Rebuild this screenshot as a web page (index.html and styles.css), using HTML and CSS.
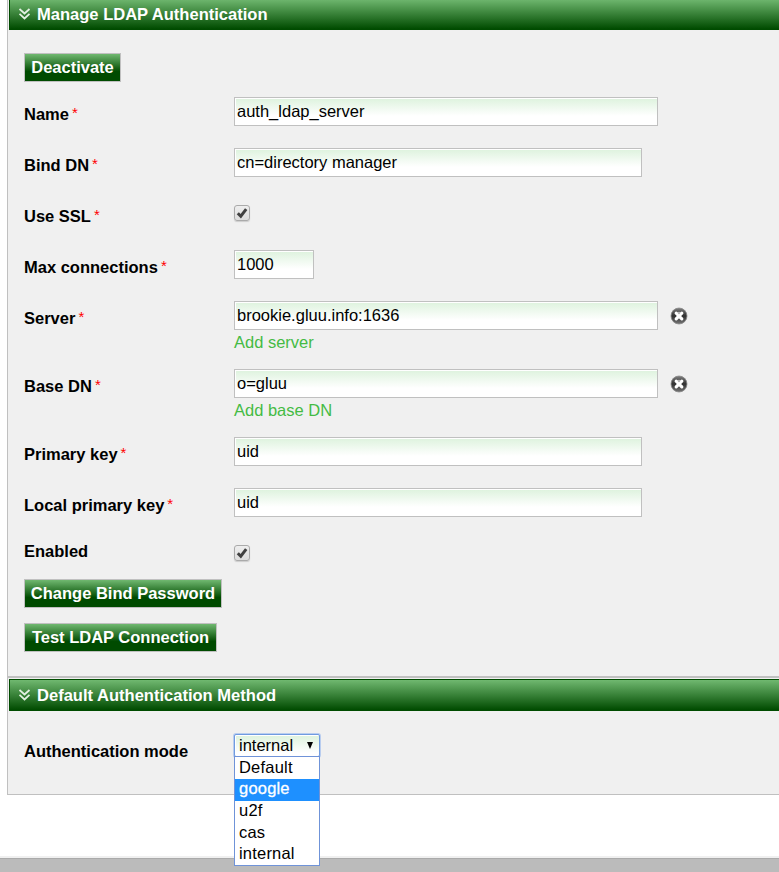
FILE: index.html
```
<!DOCTYPE html>
<html lang="en">
<head>
<meta charset="utf-8">
<title>Manage Authentication</title>
<link rel="stylesheet" href="styles.css">
</head>
<body>
<svg class="defs" width="0" height="0" aria-hidden="true">
  <defs>
    <linearGradient id="ball" x1="0" y1="0" x2="0" y2="1"><stop offset="0" stop-color="#808080"/><stop offset=".5" stop-color="#303030"/><stop offset="1" stop-color="#777"/></linearGradient>
    <symbol id="chevrons" viewBox="0 0 12 12"><path d="M.5 1l5 4.500 5-4.500M.5 5.800l5 4.700 5-4.700" fill="none" stroke="#e3f0e3" stroke-width="1.800"/></symbol>
    <symbol id="remove" viewBox="0 0 18 18"><circle cx="9" cy="9" r="8" fill="url(#ball)" stroke="#888" stroke-width=".8"/><path d="M6.200 6.200l5.600 5.600M11.800 6.200l-5.600 5.600" stroke="#fff" stroke-width="3.200" stroke-linecap="round"/><circle cx="9" cy="6" r="1.200" fill="#bbb"/></symbol>
    <symbol id="tick" viewBox="0 0 14 14"><path d="M2.800 7.200l3 3 5.400-7" fill="none" stroke="#414141" stroke-width="3"/></symbol>
  </defs>
</svg>
<main>
  <section class="panel panel-ldap">
    <h2 class="panel-head"><svg class="chevrons"><use href="#chevrons"/></svg><span>Manage LDAP Authentication</span></h2>
    <div class="panel-body">
      <button class="btn deactivate">Deactivate</button>
      <div class="row"><label>Name<i>*</i></label><div class="field wide">auth_ldap_server</div></div>
      <div class="row"><label>Bind DN<i>*</i></label><div class="field mid">cn=directory manager</div></div>
      <div class="row"><label>Use SSL<i>*</i></label><span class="check"><svg><use href="#tick"/></svg></span></div>
      <div class="row"><label>Max connections<i>*</i></label><div class="field short">1000</div></div>
      <div class="row tall"><label>Server<i>*</i></label><div><div class="line"><div class="field wide">brookie.gluu.info:1636</div><svg class="remove"><use href="#remove"/></svg></div><a class="add">Add server</a></div></div>
      <div class="row tall"><label>Base DN<i>*</i></label><div><div class="line"><div class="field wide">o=gluu</div><svg class="remove"><use href="#remove"/></svg></div><a class="add">Add base DN</a></div></div>
      <div class="row"><label>Primary key<i>*</i></label><div class="field mid">uid</div></div>
      <div class="row"><label>Local primary key<i>*</i></label><div class="field mid">uid</div></div>
      <div class="row enabled"><label>Enabled</label><span class="check"><svg><use href="#tick"/></svg></span></div>
      <button class="btn change">Change Bind Password</button>
      <button class="btn test">Test LDAP Connection</button>
    </div>
  </section>
  <section class="panel panel-mode">
    <h2 class="panel-head"><svg class="chevrons"><use href="#chevrons"/></svg><span>Default Authentication Method</span></h2>
    <div class="mode-row">
      <label>Authentication mode</label>
      <div class="select">
        <div class="select-box">internal<span class="arrow"></span></div>
        <ul class="menu"><li>Default</li><li class="active">google</li><li>u2f</li><li>cas</li><li>internal</li></ul>
      </div>
    </div>
  </section>
</main>
<footer></footer>
</body>
</html>
```
FILE: styles.css
```
* { box-sizing: border-box; }
body { margin: 0; height: 872px; overflow: hidden; background: #fff; color: #000; font: 16.5px/18px "Liberation Sans", Arial, sans-serif; display: flex; flex-direction: column; }
.defs { position: absolute; }
main { height: 856px; padding-left: 7px; }
.panel { background: #f0f0f0; border: 1px solid silver; border-right: 0; }
.panel-ldap { height: 677px; border-top: 0; overflow: hidden; }
.panel-mode { height: 118px; padding-top: 1px; }
.panel-head { margin: 0 0 0 1px; height: 32px; padding-left: 9px; display: flex; align-items: center; gap: 6px; border: 1px solid #004b00; border-right: 0; background: linear-gradient(#70b870, #004b00); color: #fff; font-size: 16.550px; line-height: 18px; }
.panel-head span { padding-top: 2px; }
.panel-ldap .panel-head { margin-top: -2px; }
.chevrons { width: 12px; height: 12px; flex: none; }
.panel-body { padding: 23px 0 0 16px; display: flex; flex-direction: column; align-items: flex-start; }
.btn { height: 29px; padding: 0 0 2px; border: 1px solid silver; border-radius: 0; background: linear-gradient(#70b870, #004b00 65%); color: #fff; font: bold 16.5px/18px "Liberation Sans", Arial, sans-serif; white-space: nowrap; }
.deactivate { width: 97px; margin-bottom: 15px; }
.change { width: 198px; margin-bottom: 15px; }
.test { width: 193px; }
.row { height: 51px; display: grid; grid-template-columns: 210px auto; align-items: start; }
.row.tall { height: 68px; }
.row.enabled { height: 40px; }
label { font-weight: bold; padding-top: 8px; white-space: nowrap; }
label i { font-style: normal; font-weight: normal; color: red; margin-left: 3px; font-size: 15px; line-height: 1; vertical-align: 2px; }
.enabled label { padding-top: 3px; }
.field { height: 29px; padding: 4px 2px; border: 1px solid silver; background: linear-gradient(#dff3df, #fff) 1px 1px / 100% 17px no-repeat #fff; white-space: nowrap; }
.wide { width: 424px; }
.mid { width: 408px; }
.short { width: 80px; }
.line { display: flex; align-items: center; gap: 12px; }
.remove { width: 18px; height: 18px; }
.add { display: block; margin-top: 3px; color: #4b4; }
.check { width: 16px; height: 16px; margin-top: 6px; border: 1px solid #aaa; border-radius: 3px; background: linear-gradient(#eee, #ddd); box-shadow: 0 1px 1px #ccc; }
.check svg { display: block; width: 14px; height: 14px; }
.mode-row { display: grid; grid-template-columns: 210px auto; padding: 22px 0 0 16px; }
.mode-row label { padding-top: 9px; }
.select { position: relative; width: 86px; height: 23px; margin-top: 1px; }
.select-box { height: 23px; padding: 1px 6px 0 4px; display: flex; justify-content: space-between; border: 1px solid #6f9be0; border-radius: 2px; box-shadow: 0 0 0 1px #b9cdef; background: linear-gradient(#dff3df, #fff) 1px 1px / 100% 17px no-repeat #fff; }
.arrow { width: 0; height: 0; margin-top: 6px; border: 3.500px solid transparent; border-top: 7px solid #000; border-bottom: 0; }
.menu { position: absolute; left: 0; top: 22px; width: 86px; height: 110px; margin: 0; padding: 0; list-style: none; border: 1px solid #6f93d8; background: #fff; z-index: 1; }
.menu li { height: 21.500px; padding: 0 4px; line-height: 19px; letter-spacing: .2px; }
.menu li:first-child { height: 22px; padding-top: 1px; }
.menu .active { background: #1e90ff; color: #fff; height: 22px; -webkit-text-stroke: .3px #fff; }
footer { height: 16px; border-top: 2px solid #f0f0f0; background: linear-gradient(#aaa 1px, #bbb 1px); }
```
